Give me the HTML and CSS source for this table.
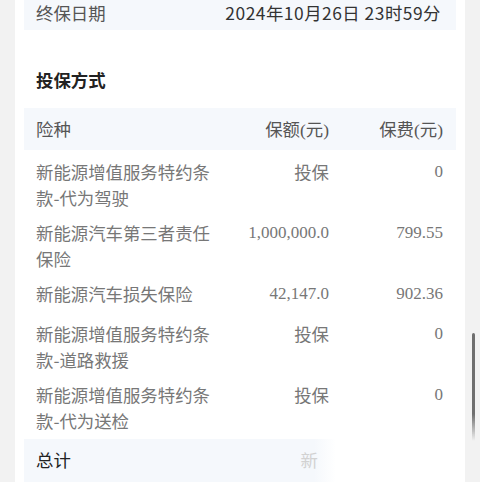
FILE: index.html
```html
<!DOCTYPE html>
<html lang="zh-CN">
  <head>
    <meta charset="UTF-8" />
    <meta name="viewport" content="width=device-width, initial-scale=1.0" />
    <title>保单详情</title>
    <link rel="stylesheet" href="styles.css">
  </head>
  <body>
    <div class="card">
      <div class="info-row">
        <span class="info-label">终保日期</span>
        <span class="info-value">2024年10月26日 23时59分</span>
      </div>

      <h2 class="section-title">投保方式</h2>

      <div class="table">
        <div class="row head">
          <div class="cell name">险种</div>
          <div class="cell amount">保额<span class="paren">(</span>元<span class="paren">)</span></div>
          <div class="cell fee">保费<span class="paren">(</span>元<span class="paren">)</span></div>
        </div>

        <div class="table-body">
          <div class="row">
            <div class="cell name">新能源增值服务特约条款-代为驾驶</div>
            <div class="cell amount">投保</div>
            <div class="cell fee num">0</div>
          </div>
          <div class="row">
            <div class="cell name">新能源汽车第三者责任保险</div>
            <div class="cell amount num">1,000,000.0</div>
            <div class="cell fee num">799.55</div>
          </div>
          <div class="row">
            <div class="cell name">新能源汽车损失保险</div>
            <div class="cell amount num">42,147.0</div>
            <div class="cell fee num">902.36</div>
          </div>
          <div class="row">
            <div class="cell name">新能源增值服务特约条款-道路救援</div>
            <div class="cell amount">投保</div>
            <div class="cell fee num">0</div>
          </div>
          <div class="row">
            <div class="cell name">新能源增值服务特约条款-代为送检</div>
            <div class="cell amount">投保</div>
            <div class="cell fee num">0</div>
          </div>
        </div>

        <div class="row total">
          <div class="cell name">总计</div>
          <div class="cell amount faint">新</div>
          <div class="cell fee"></div>
        </div>
      </div>
    </div>

    <div class="scrollbar"></div>
  </body>
</html>
```

FILE: styles.css
```css
:root {
  --page-bg: #f2f2f2;
  --row-bg: #f5f8fc;
  --text-dark: #222;
  --text-mid: #555;
  --text-light: #777;
}

body {
  margin: 0;
  padding: 0;
  background: var(--page-bg);
  font-family: "Noto Sans CJK SC", "Noto Sans", sans-serif;
  font-size: 17.4px;
  color: var(--text-mid);
  overflow: hidden;
}

.card {
  margin: 0 15px;
  padding: 0 9px;
  min-height: 482px;
  background: #fff;
}

.info-row {
  display: flex;
  justify-content: space-between;
  padding: 0 15px 4px 12px;
  line-height: 26px;
  background: var(--row-bg);
}

.info-value {
  color: #333;
  letter-spacing: 0.5px;
}

.section-title {
  margin: 0;
  padding: 37px 12px 15px;
  font-size: 17.4px;
  line-height: 26px;
  font-weight: 700;
  color: var(--text-dark);
}

.row {
  display: grid;
  grid-template-columns: 176px 117px 114px;
  align-items: start;
  min-height: 40px;
  padding: 4px 13px 5px 12px;
  line-height: 26px;
  box-sizing: border-box;
}

.head {
  min-height: 41px;
  padding: 8px 13px 7px 12px;
  background: var(--row-bg);
}

.table-body {
  padding-top: 5px;
  color: var(--text-light);
}

.amount,
.fee {
  text-align: right;
}

.num,
.paren {
  font-family: "Liberation Serif", "Noto Sans CJK SC", serif;
}

.num {
  font-size: 17px;
}

.total {
  padding-top: 8px;
  min-height: 50px;
  color: var(--text-dark);
  background: linear-gradient(to right, var(--row-bg) 0, var(--row-bg) 290px, rgba(245, 248, 252, 0) 312px);
}

.faint {
  padding-right: 11px;
  color: #d2d2d2;
}

/* scroll indicator on the right edge */
.scrollbar {
  position: fixed;
  top: 333px;
  right: 5px;
  width: 3px;
  height: 108px;
  border-radius: 2px;
  background: linear-gradient(to bottom, #6f6f6f 0, #6f6f6f 75%, rgba(111, 111, 111, 0) 100%);
}
```
